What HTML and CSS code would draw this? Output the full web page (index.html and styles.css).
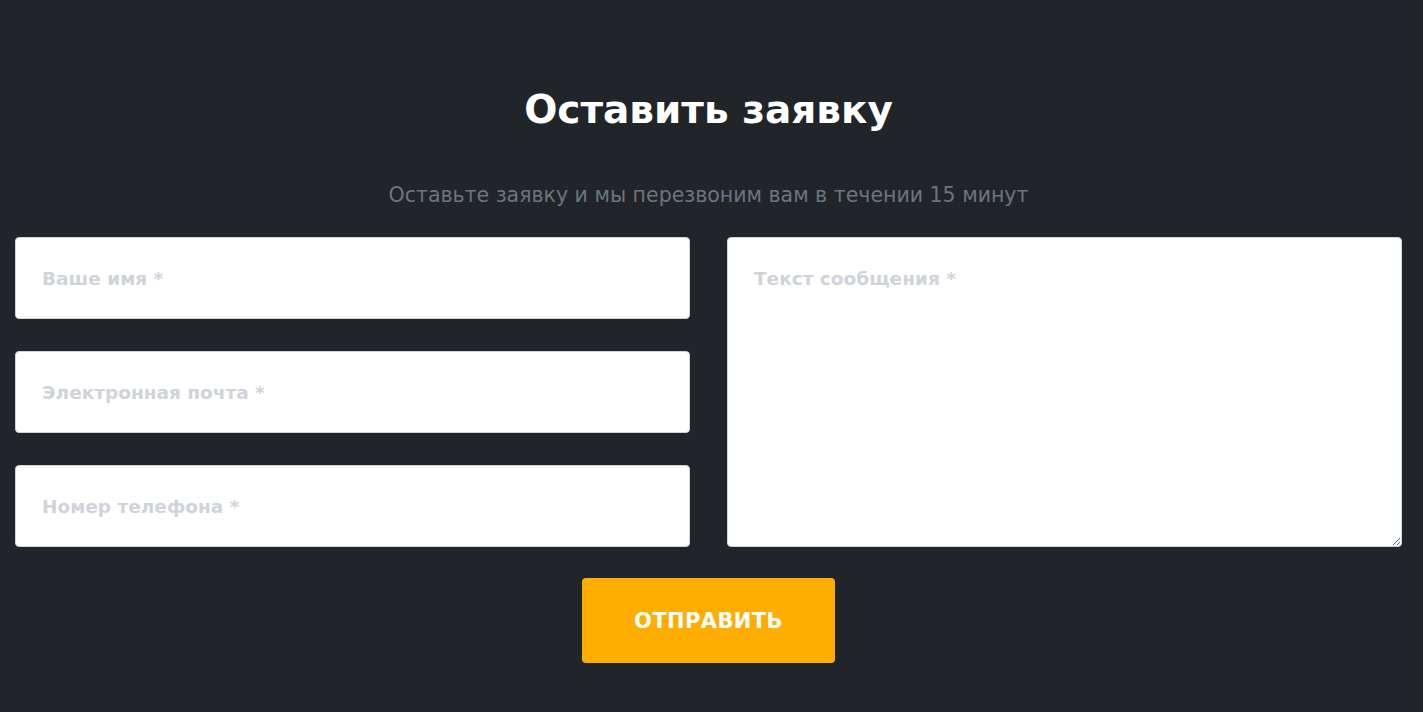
FILE: index.html
```html
<!DOCTYPE html>
<html lang="ru">
<head>
<meta charset="utf-8">
<title>Оставить заявку</title>
<link rel="stylesheet" href="styles.css">
</head>
<body>
<section class="request">
  <h2 class="request__title">Оставить заявку</h2>
  <p class="request__subtitle">Оставьте заявку и мы перезвоним вам в течении 15 минут</p>
  <form class="request__form">
    <div class="request__fields">
      <div class="request__col">
        <input class="field" type="text" placeholder="Ваше имя *">
        <input class="field" type="email" placeholder="Электронная почта *">
        <input class="field" type="tel" placeholder="Номер телефона *">
      </div>
      <textarea class="field field--area" placeholder="Текст сообщения *"></textarea>
    </div>
    <button class="request__btn" type="button">ОТПРАВИТЬ</button>
  </form>
</section>
</body>
</html>
```
FILE: styles.css
```css
* { box-sizing: border-box; }
html, body {
  margin: 0;
  padding: 0;
  background: #212429;
  height: 100%;
}
body {
  font-family: "DejaVu Sans", "Noto Sans", sans-serif;
  overflow: hidden;
}
.request {
  padding: 86px 21px 0 15px;
  display: flex;
  flex-direction: column;
  align-items: center;
}
.request__title {
  margin: 0;
  color: #fff;
  font-size: 39px;
  font-weight: 700;
  line-height: 48px;
}
.request__subtitle {
  margin: 49px 0 0;
  color: #6c757d;
  font-size: 20.5px;
  font-weight: 400;
  line-height: 24px;
}
.request__form {
  width: 100%;
  margin-top: 30px;
  display: flex;
  flex-direction: column;
  align-items: center;
}
.request__fields {
  width: 100%;
  display: grid;
  grid-template-columns: 1fr 1fr;
  column-gap: 37px;
}
.request__col {
  display: flex;
  flex-direction: column;
  gap: 32px;
}
.field {
  display: block;
  width: 100%;
  height: 82px;
  margin: 0;
  padding: 0 26px;
  border: 1px solid #ced4da;
  border-radius: 4px;
  background: #fff;
  font-family: inherit;
  font-size: 18.5px;
  font-weight: 700;
  color: #333;
  outline: none;
}
.field::placeholder { color: #d0d4da; opacity: 1; }
.field--area {
  height: 310px;
  padding: 29px 26px;
  resize: vertical;
  line-height: 24px;
}
.request__btn {
  margin-top: 31px;
  width: 253px;
  height: 85px;
  border: 0;
  border-radius: 4px;
  background: #ffad00;
  color: #fff;
  font-family: inherit;
  font-size: 21px;
  font-weight: 700;
  letter-spacing: 0.4px;
  cursor: pointer;
}
```
